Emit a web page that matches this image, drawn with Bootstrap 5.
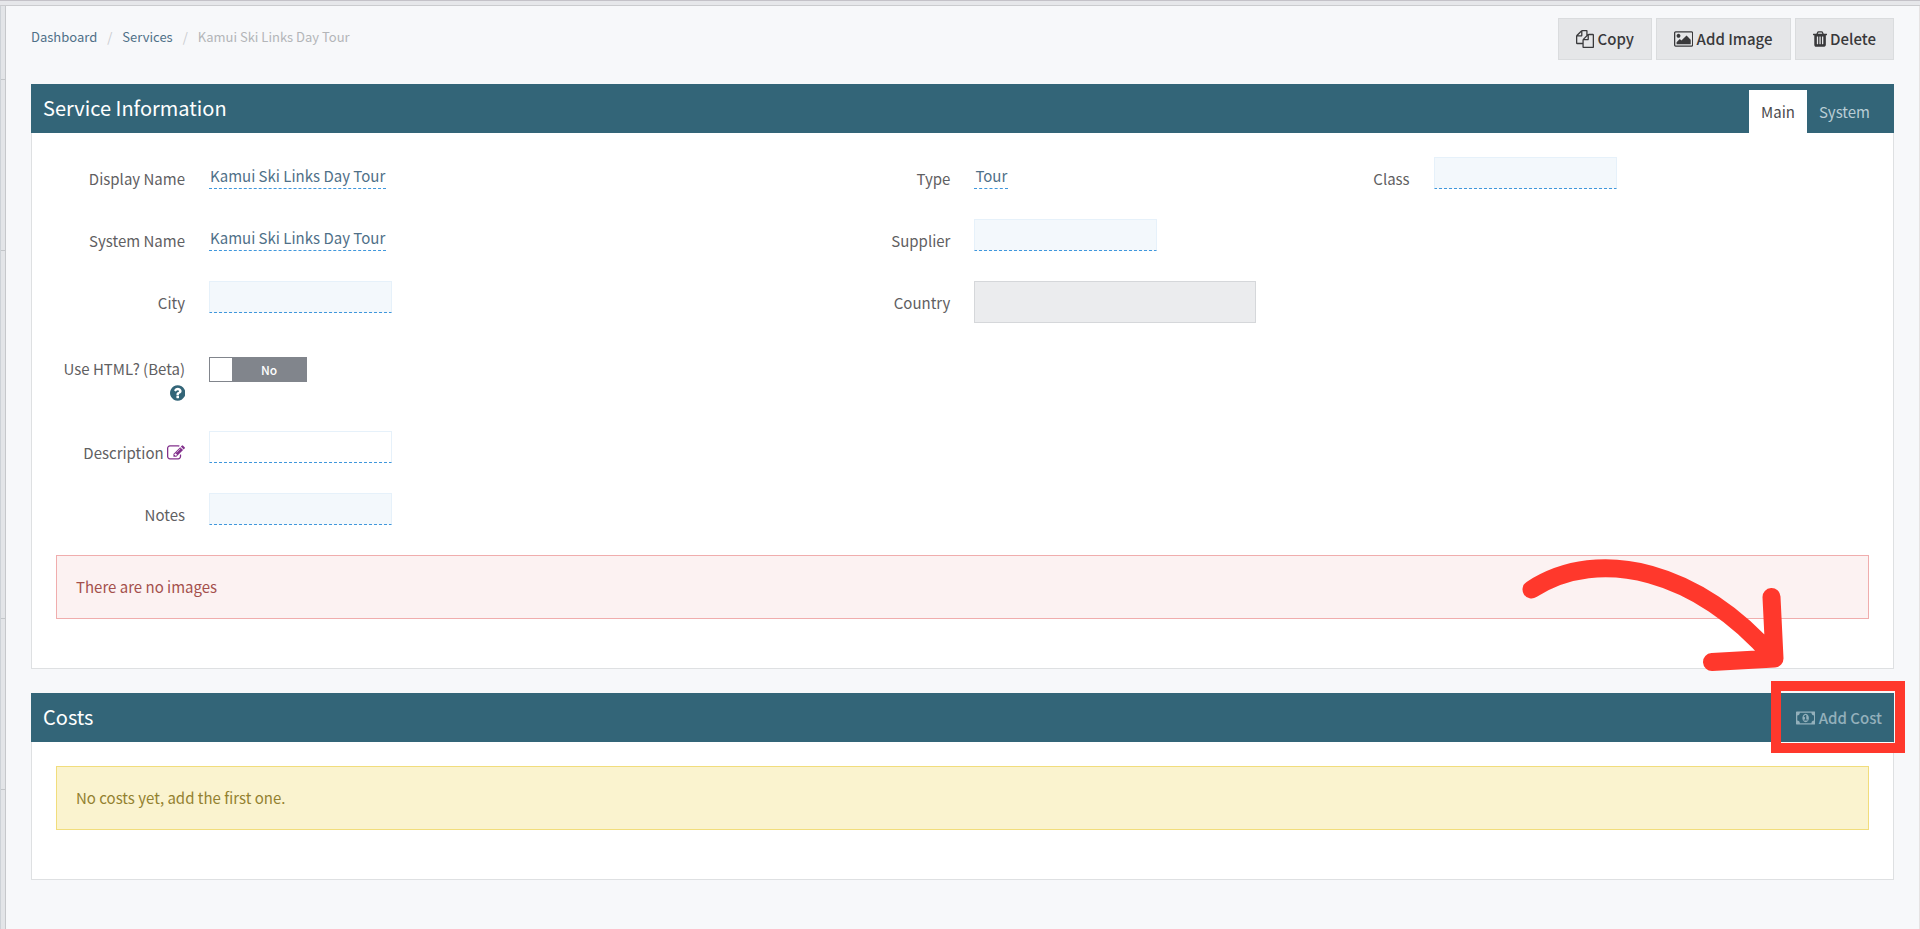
<!DOCTYPE html>
<html lang="en">
<head>
<meta charset="utf-8">
<meta name="viewport" content="width=device-width, initial-scale=1">
<title>Kamui Ski Links Day Tour</title>
<link href="https://cdn.jsdelivr.net/npm/bootstrap@5.3.0/dist/css/bootstrap.min.css" rel="stylesheet">
<style>
:root { --teal: #336578; --line: #dee0e2; --dash: #3f97dc; }
body { font-family: "Noto Sans CJK SC", "Source Sans Pro", sans-serif; font-size: 15px; line-height: 24px; color: #5f6062; background: #f7f8fa; }
a { color: #4f7088; text-decoration: none; }
.fa-icon { height: 18px; width: auto; fill: currentColor; vertical-align: -3px; }
.top-strip { height: 6px; background: #e6e7ea; border-top: 1px solid #c4c2c8; border-bottom: 1px solid #cbcccf; }
.side-strip { width: 6px; background: #e3e5e8; border-left: 1px solid #cdd2d7; border-right: 1px solid #c6c8cb; }
.side-gap { height: 171px; border-bottom: 1px solid #c3c6c9; }
.side-gap:first-child { height: 74px; }
.side-gap:nth-child(3) { height: 368px; }
main { padding: 12px 25px 24px; border-right: 1px solid #e6e3e3; }
.breadcrumb { padding-top: 9px; font-size: 13px; line-height: 20px; --bs-breadcrumb-divider-color: #c9cbce; --bs-breadcrumb-item-padding-x: 10px; --bs-breadcrumb-item-active-color: #b3b5b8; }
.btn-tool { --bs-btn-bg: #e5e6e8; --bs-btn-border-color: #dadcde; --bs-btn-color: #39393b; --bs-btn-border-radius: 0; --bs-btn-font-weight: 500; --bs-btn-padding-x: 17px; --bs-btn-padding-y: 8px; --bs-btn-line-height: 24px; --bs-btn-font-size: 15px; }
.panel { --bs-card-border-radius: 0; --bs-card-border-color: var(--line); --bs-card-inner-border-radius: 0; margin-bottom: 24px; }
.panel > .card-header { height: 49px; margin: -1px -1px 0; padding: 0 12px; background: var(--teal); border: 0; color: #fff; }
.panel > .card-body { padding: 24px 24px 49px; }
.panel h2 { font-size: 20px; line-height: 48px; font-weight: 400; }
.nav-tabs { --bs-nav-tabs-border-width: 0; --bs-nav-tabs-border-radius: 0; --bs-nav-tabs-link-active-color: #4b4b4d; --bs-nav-link-color: #b9cdd5; --bs-nav-link-padding-x: 12px; --bs-nav-link-padding-y: 9px; margin-right: 0; }
.nav-tabs .nav-link { line-height: 25px; }
.field { display: flex; gap: 24px; min-height: 62px; align-items: flex-start; }
.field-tall { min-height: 88px; padding-top: 14px; }
.field-name { flex: 0 0 129px; text-align: right; padding-top: 10px; white-space: nowrap; }
.field-tall .field-name { padding-top: 0; }
.field-value { border-bottom: 1px dashed var(--dash); padding: 7px 1px 0; line-height: 24px; height: 32px; }
.field-box { width: 183px; height: 32px; padding: 0 8px; border: 1px solid #e6f1fa; border-bottom: 1px dashed var(--dash); background: #f3f8fc; }
.field-box.plain { background: #fff; }
.field-locked { flex: 0 1 282px; min-width: 0; height: 42px; border: 1px solid #d5d7da; border-radius: 0; background: #ebecee; }
.toggle { width: 98px; height: 25px; border: 1px solid #81858c; background: #81858c; color: #fff; font-size: 12px; font-weight: 500; line-height: 23px; }
.toggle input { appearance: none; width: 22px; height: 23px; margin: 0; background: #fff; }
.note { margin: 0; padding: 19px; border-radius: 0; }
.note-red { background: #fcf2f2; border-color: #f0adad; color: #a4504c; }
.note-yellow { background: #faf3cf; border-color: #f1dd7c; color: #93812f; }
.add-cost { border: 0; background: none; padding: 0; color: #93b0bb; font-weight: 500; }
.help { color: var(--teal); }
.edit { color: #82308c; }
.callout-box { position: absolute; top: -12px; right: -11px; bottom: -11px; width: 134px; border: 10px solid #ff382c; pointer-events: none; }
.callout-arrow { position: absolute; right: 100px; bottom: 72px; width: 270px; height: 120px; overflow: visible; pointer-events: none; z-index: 2; }
</style>
</head>
<body>
<div class="min-vh-100 d-flex flex-column">
  <div class="top-strip"></div>
  <div class="flex-grow-1 d-flex">
    <div class="side-strip flex-shrink-0" aria-hidden="true">
      <div class="side-gap"></div>
      <div class="side-gap"></div>
      <div class="side-gap"></div>
      <div class="side-gap"></div>
    </div>
    <main class="flex-grow-1">
      <div class="d-flex justify-content-between align-items-start mb-4">
        <nav aria-label="breadcrumb">
          <ol class="breadcrumb mb-0">
            <li class="breadcrumb-item"><a href="#">Dashboard</a></li>
            <li class="breadcrumb-item"><a href="#">Services</a></li>
            <li class="breadcrumb-item active" aria-current="page">Kamui Ski Links Day Tour</li>
          </ol>
        </nav>
        <div class="d-flex gap-1">
          <button type="button" class="btn btn-tool"><svg class="fa-icon" viewBox="0 0 1792 1792" aria-hidden="true"><path d="M1696 384q40 0 68 28t28 68v1216q0 40-28 68t-68 28h-960q-40 0-68-28t-28-68v-288h-544q-40 0-68-28t-28-68v-672q0-40 20-88t48-76l408-408q28-28 76-48t88-20h416q40 0 68 28t28 68v328q68-40 128-40h416zm-544 213l-299 299h299v-299zm-640-384l-299 299h299v-299zm196 647l316-316v-416h-384v416q0 40-28 68t-68 28h-416v640h512v-256q0-40 20-88t48-76zm956 804v-1152h-384v416q0 40-28 68t-68 28h-416v640h896z"/></svg> Copy</button>
          <button type="button" class="btn btn-tool"><svg class="fa-icon" viewBox="-64 0 1920 1792" aria-hidden="true"><path d="M576 576q0 80-56 136t-136 56-136-56-56-136 56-136 136-56 136 56 56 136zm1024 384v448h-1408v-192l320-320 160 160 512-512zm96-704h-1600q-13 0-22.500 9.500t-9.500 22.500v1216q0 13 9.500 22.500t22.500 9.500h1600q13 0 22.500-9.500t9.500-22.500v-1216q0-13-9.500-22.500t-22.500-9.500zm160 32v1216q0 66-47 113t-113 47h-1600q-66 0-113-47t-47-113v-1216q0-66 47-113t113-47h1600q66 0 113 47t47 113z"/></svg> Add Image</button>
          <button type="button" class="btn btn-tool"><svg class="fa-icon" viewBox="192 0 1408 1792" aria-hidden="true"><path d="M704 1376v-704q0-14-9-23t-23-9h-64q-14 0-23 9t-9 23v704q0 14 9 23t23 9h64q14 0 23-9t9-23zm256 0v-704q0-14-9-23t-23-9h-64q-14 0-23 9t-9 23v704q0 14 9 23t23 9h64q14 0 23-9t9-23zm256 0v-704q0-14-9-23t-23-9h-64q-14 0-23 9t-9 23v704q0 14 9 23t23 9h64q14 0 23-9t9-23zm-544-992h448l-48-117q-7-9-17-11h-317q-10 2-17 11zm928 32v64q0 14-9 23t-23 9h-96v948q0 83-47 143.500t-113 60.500h-832q-66 0-113-58.500t-47-141.500v-952h-96q-14 0-23-9t-9-23v-64q0-14 9-23t23-9h309l70-167q15-37 54-63t79-26h320q40 0 79 26t54 63l70 167h309q14 0 23 9t9 23z"/></svg> Delete</button>
        </div>
      </div>

      <section class="card panel">
        <div class="card-header d-flex justify-content-between">
          <h2 class="mb-0">Service Information</h2>
          <ul class="nav nav-tabs align-self-end">
            <li class="nav-item"><a class="nav-link active" aria-current="page" href="#">Main</a></li>
            <li class="nav-item"><a class="nav-link" href="#">System</a></li>
          </ul>
        </div>
        <div class="card-body">
          <div class="row">
            <div class="col-5">
              <div class="field"><span class="field-name" id="n-display">Display Name</span><a class="field-value" href="#" aria-describedby="n-display">Kamui Ski Links Day Tour</a></div>
              <div class="field"><span class="field-name" id="n-system">System Name</span><a class="field-value" href="#" aria-describedby="n-system">Kamui Ski Links Day Tour</a></div>
              <div class="field"><label class="field-name" for="city">City</label><input class="field-box" id="city" type="text"></div>
              <div class="field field-tall">
                <label class="field-name" for="use-html">Use HTML? (Beta)<br><svg class="fa-icon help" viewBox="128 0 1536 1792" aria-hidden="true"><path d="M1024 1376v-192q0-14-9-23t-23-9h-192q-14 0-23 9t-9 23v192q0 14 9 23t23 9h192q14 0 23-9t9-23zm256-672q0-88-55.500-163t-138.500-116-170-41q-243 0-371 213-15 24 8 42l132 100q7 6 19 6 16 0 25-12 53-68 86-92 34-24 86-24 48 0 85.500 26t37.500 59q0 38-20 61t-68 45q-63 28-115.500 86.500t-52.500 125.500v36q0 14 9 23t23 9h192q14 0 23-9t9-23q0-19 21.500-49.500t54.500-49.500q32-18 49-28.500t46-35 44.500-48 28-60.500 12.500-81zm384 192q0 209-103 385.500t-279.500 279.500-385.500 103-385.500-103-279.500-279.500-103-385.500 103-385.500 279.500-279.500 385.500-103 385.500 103 279.500 279.500 103 385.500z"/></svg></label>
                <label class="toggle d-flex"><input type="checkbox" role="switch" id="use-html"><span class="flex-fill text-center">No</span></label>
              </div>
              <div class="field"><label class="field-name" for="description">Description <svg class="fa-icon edit" viewBox="0 0 1792 1792" aria-hidden="true"><path d="M888 1184l116-116-152-152-116 116v56h96v96h56zm440-720q-16-16-33 1l-350 350q-17 17-1 33t33-1l350-350q17-17 1-33zm80 594v190q0 119-84.500 203.500t-203.500 84.500h-832q-119 0-203.500-84.500t-84.500-203.500v-832q0-119 84.500-203.500t203.500-84.500h832q63 0 117 25 15 7 18 23 3 17-9 29l-49 49q-14 14-32 8-23-6-45-6h-832q-66 0-113 47t-47 113v832q0 66 47 113t113 47h832q66 0 113-47t47-113v-126q0-13 9-22l64-64q15-15 35-7t20 29zm-96-738l288 288-672 672h-288v-288zm444 132l-92 92-288-288 92-92q28-28 68-28t68 28l152 152q28 28 28 68t-28 68z"/></svg></label><input class="field-box plain" id="description" type="text"></div>
              <div class="field"><label class="field-name" for="notes">Notes</label><input class="field-box" id="notes" type="text"></div>
            </div>
            <div class="col-3">
              <div class="field"><span class="field-name" id="n-type">Type</span><a class="field-value" href="#" aria-describedby="n-type">Tour</a></div>
              <div class="field"><label class="field-name" for="supplier">Supplier</label><input class="field-box" id="supplier" type="text"></div>
              <div class="field"><label class="field-name" for="country">Country</label><input class="field-locked" id="country" type="text" disabled></div>
            </div>
            <div class="col-3">
              <div class="field"><label class="field-name" for="class">Class</label><input class="field-box" id="class" type="text"></div>
            </div>
          </div>
          <div class="alert note note-red">There are no images</div>
        </div>
      </section>

      <section class="card panel">
        <div class="card-header d-flex justify-content-between position-relative">
          <h2 class="mb-0">Costs</h2>
          <button type="button" class="add-cost"><svg class="fa-icon" viewBox="-64 0 1920 1792" aria-hidden="true"><path d="M704 1152h384v-96h-128v-448h-114l-148 137 77 80q42-37 55-57h2v288h-128v96zm512-256q0 70-21 142t-59.500 134-101.500 101-138 39-138-39-101.500-101-59.500-134-21-142 21-142 59.500-134 101.500-101 138-39 138 39 101.500 101 59.500 134 21 142zm512 256v-512q-106 0-181-75t-75-181h-1152q0 106-75 181t-181 75v512q106 0 181 75t75 181h1152q0-106 75-181t181-75zm128-832v1152q0 26-19 45t-45 19h-1792q-26 0-45-19t-19-45v-1152q0-26 19-45t45-19h1792q26 0 45 19t19 45z"/></svg> Add Cost</button>
          <span class="callout-box"></span>
          <svg class="callout-arrow" viewBox="0 0 270 120" fill="none" stroke="#ff382c" stroke-width="18" stroke-linecap="round" stroke-linejoin="round" aria-hidden="true"><path d="M7.500 39.500C76 -5 176 22 248 106M247.500 47L250.500 108.500L188 112"/></svg>
        </div>
        <div class="card-body">
          <div class="alert note note-yellow">No costs yet, add the first one.</div>
        </div>
      </section>
    </main>
  </div>
</div>
<script src="https://cdn.jsdelivr.net/npm/bootstrap@5.3.0/dist/js/bootstrap.bundle.min.js"></script>
</body>
</html>
